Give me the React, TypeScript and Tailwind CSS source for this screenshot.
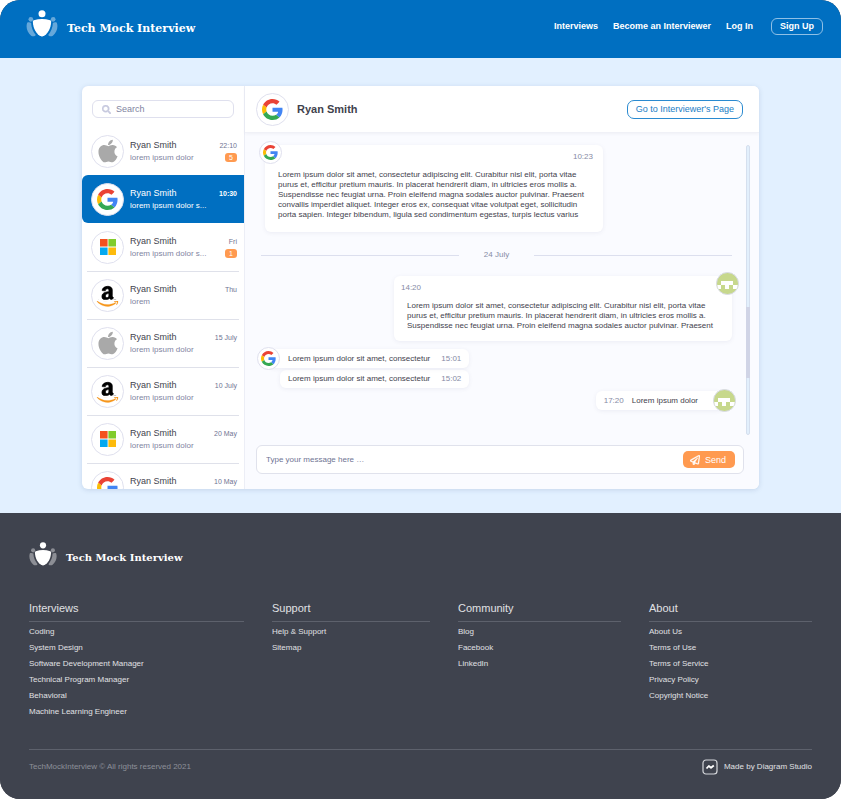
import React from "react";
import { FaAmazon, FaApple, FaRegPaperPlane, FaSearch } from "react-icons/fa";

type Brand = "apple" | "google" | "microsoft" | "amazon";

interface Conversation {
  brand: Brand;
  preview?: string;
  date: string;
  unread?: number;
  active?: boolean;
}

const conversations: Conversation[] = [
  { brand: "apple", preview: "lorem ipsum dolor", date: "22:10", unread: 5 },
  { brand: "google", preview: "lorem ipsum dolor s...", date: "10:30", active: true },
  { brand: "microsoft", preview: "lorem ipsum dolor s...", date: "Fri", unread: 1 },
  { brand: "amazon", preview: "lorem", date: "Thu" },
  { brand: "apple", preview: "lorem ipsum dolor", date: "15 July" },
  { brand: "amazon", preview: "lorem ipsum dolor", date: "10 July" },
  { brand: "microsoft", preview: "lorem ipsum dolor", date: "20 May" },
  { brand: "google", date: "10 May" },
];

const footerColumns = [
  {
    title: "Interviews",
    links: [
      "Coding",
      "System Design",
      "Software Development Manager",
      "Technical Program Manager",
      "Behavioral",
      "Machine Learning Engineer",
    ],
  },
  { title: "Support", links: ["Help & Support", "Sitemap"] },
  { title: "Community", links: ["Blog", "Facebook", "LinkedIn"] },
  {
    title: "About",
    links: ["About Us", "Terms of Use", "Terms of Service", "Privacy Policy", "Copyright Notice"],
  },
];

function LogoMark({ className }: { className: string }) {
  return (
    <svg viewBox="77 31 95 81" className={className} fill="#fff" aria-hidden="true">
      <g opacity="0.4">
        <circle cx="91" cy="59" r="7" />
        <circle cx="158" cy="59" r="7" />
        <path d="M80 69C84 67 89 68 92 70C92 83 98 97 106 106C103 111 96 111 92 108C81 99 75 83 80 69Z" />
        <path d="M169 69C165 67 160 68 157 70C157 83 151 97 143 106C146 111 153 111 157 108C168 99 174 83 169 69Z" />
      </g>
      <circle cx="124.5" cy="42" r="10.5" />
      <path d="M97 66Q97 63 100 62Q124.5 54 149 62Q152 63 152 66C151 87 142 103 127 110Q124.5 111 122 110C107 103 98 87 97 66Z" />
    </svg>
  );
}

function GoogleLogo({ className }: { className: string }) {
  return (
    <svg viewBox="0 0 48 48" className={className} aria-hidden="true">
      <path fill="#EA4335" d="M24 9.5c3.54 0 6.71 1.22 9.21 3.6l6.85-6.85C35.9 2.38 30.47 0 24 0 14.62 0 6.51 5.38 2.56 13.22l7.98 6.19C12.43 13.72 17.74 9.5 24 9.5z" />
      <path fill="#4285F4" d="M46.98 24.55c0-1.57-.15-3.09-.38-4.55H24v9.02h12.94c-.58 2.96-2.26 5.48-4.78 7.18l7.73 6c4.51-4.18 7.09-10.36 7.09-17.65z" />
      <path fill="#FBBC05" d="M10.53 28.59c-.48-1.45-.76-2.99-.76-4.59s.27-3.14.76-4.59l-7.98-6.19C.92 16.46 0 20.12 0 24c0 3.88.92 7.54 2.56 10.78l7.97-6.19z" />
      <path fill="#34A853" d="M24 48c6.48 0 11.93-2.13 15.89-5.81l-7.73-6c-2.15 1.45-4.92 2.3-8.16 2.3-6.26 0-11.57-4.22-13.47-9.91l-7.98 6.19C6.51 42.62 14.62 48 24 48z" />
    </svg>
  );
}

function BrandLogo({ brand }: { brand: Brand }) {
  switch (brand) {
    case "apple":
      return <FaApple className="size-[26px] text-[#a9a9a9]" aria-hidden="true" />;
    case "google":
      return <GoogleLogo className="size-[21px]" />;
    case "microsoft":
      return (
        <svg viewBox="0 0 16 16" className="size-4" aria-hidden="true">
          <path fill="#f4511e" d="M0 0h7.6v7.6H0z" />
          <path fill="#81cc2b" d="M8.4 0H16v7.6H8.4z" />
          <path fill="#03a9f0" d="M0 8.4h7.6V16H0z" />
          <path fill="#fdbb0c" d="M8.4 8.4H16V16H8.4z" />
        </svg>
      );
    case "amazon":
      return (
        <span className="grid place-items-center" aria-hidden="true">
          <FaAmazon className="col-start-1 row-start-1 size-[21px] stroke-black stroke-[16] text-black [clip-path:inset(0_0_27%_0)]" />
          <FaAmazon className="col-start-1 row-start-1 size-[25px] stroke-[#f7981d] stroke-[4] text-[#f7981d] [clip-path:inset(74%_0_0_0)]" />
        </span>
      );
  }
}

function BrandAvatar({ brand }: { brand: Brand }) {
  return (
    <span className="flex size-[33px] shrink-0 items-center justify-center rounded-full border border-[#dfe0ee] bg-white">
      <BrandLogo brand={brand} />
    </span>
  );
}

function SmallGoogleAvatar({ className }: { className: string }) {
  return (
    <span className={`absolute flex size-[23px] items-center justify-center rounded-full border border-[#dfe0ee] bg-white ${className}`}>
      <GoogleLogo className="size-[15px]" />
    </span>
  );
}

function UserAvatar({ className }: { className: string }) {
  return (
    <span className={`absolute size-[23px] overflow-hidden rounded-full border border-[#d9dbe8] bg-[#c7d88c] ${className}`}>
      <svg viewBox="0 0 21 21" className="size-full" shapeRendering="crispEdges" aria-hidden="true">
        <path fill="#fff" d="M4 8h12v4H4zM0 12h4v4H0zM8 12h4v4H8zM16 12h5v4h-5z" />
      </svg>
    </span>
  );
}

function ConversationRow({ item }: { item: Conversation }) {
  const active = item.active;
  return (
    <li>
      <button
        type="button"
        className={`flex h-12 w-full items-center pr-[7px] pl-[9px] text-left ${active ? "rounded-l-[6px] bg-[#006fc1]" : ""}`}
      >
        <BrandAvatar brand={item.brand} />
        <span className="ml-[6px] flex h-[25px] min-w-0 flex-1 flex-col gap-px">
          <span className={`text-[9px] leading-3 ${active ? "text-white" : "text-[#3f424d]"}`}>Ryan Smith</span>
          {item.preview && (
            <span className={`text-[8px] leading-3 whitespace-nowrap ${active ? "text-white" : "text-[#7f849f]"}`}>{item.preview}</span>
          )}
        </span>
        <span className="flex h-6 shrink-0 flex-col items-end">
          <span className={`text-[7px] leading-[14px] ${active ? "font-bold text-white" : "text-[#6f7493]"}`}>{item.date}</span>
          {item.unread && (
            <span className="flex h-[9px] w-3 items-center justify-center rounded-[3px] bg-[#ff9a50] text-[7px] leading-[9px] text-white">
              {item.unread}
            </span>
          )}
        </span>
      </button>
    </li>
  );
}

const bubble = "bg-white shadow-[0_1px_4px_rgba(63,66,110,0.08)]";
const messageText = "text-[8px] leading-[10px] text-[#3f424d]";
const timeText = "text-[8px] leading-[10px] text-[#868ba5]";

function ChatPanel() {
  return (
    <section className="flex min-w-0 flex-1 flex-col bg-[#fafbff]">
      <header className="flex h-[47px] shrink-0 items-center border-b border-[#f0f1f7] bg-white pr-4 pl-[11px] shadow-[0_1px_3px_rgba(63,66,110,0.06)]">
        <BrandAvatar brand="google" />
        <h1 className="ml-2 flex-1 text-[11px] leading-4 font-bold text-[#3f424d]">Ryan Smith</h1>
        <button
          type="button"
          className="h-[19px] rounded-[7px] border border-[#2a8ad0] bg-white px-2 text-[9px] leading-4 text-[#1a7dc5]"
        >
          Go to Interviewer's Page
        </button>
      </header>

      <div className="flex min-h-0 flex-1 pt-3 pr-[9px] pl-4">
        <div className="flex min-w-0 flex-1 flex-col pr-[14px]">
          <article className={`relative ml-1 w-[338px] rounded-[6px] px-[13px] pt-[7px] pb-3 ${bubble}`}>
            <SmallGoogleAvatar className="-top-1 -left-[6px]" />
            <time className={`-mr-[3px] block text-right ${timeText}`}>10:23</time>
            <p className={`mt-2 pr-1 ${messageText}`}>
              Lorem ipsum dolor sit amet, consectetur adipiscing elit. Curabitur nisl elit, porta vitae purus et,
              efficitur pretium mauris. In placerat hendrerit diam, in ultricies eros mollis a. Suspendisse nec
              feugiat urna. Proin eleifend magna sodales auctor pulvinar. Praesent convallis imperdiet aliquet.
              Integer eros ex, consequat vitae volutpat eget, sollicitudin porta sapien. Integer bibendum, ligula sed
              condimentum egestas, turpis lectus varius
            </p>
          </article>

          <div className="mt-[18px] flex items-center gap-[25px]">
            <span className="h-px flex-1 bg-[#dcdfee]" />
            <span className={timeText}>24 July</span>
            <span className="h-px flex-1 bg-[#dcdfee]" />
          </div>

          <article className={`relative mt-4 w-[338px] self-end rounded-[6px] px-[13px] pt-[7px] pb-[10px] ${bubble}`}>
            <UserAvatar className="-top-1 -right-[7px]" />
            <time className={`-ml-[6px] block ${timeText}`}>14:20</time>
            <p className={`mt-2 pr-1 ${messageText}`}>
              Lorem ipsum dolor sit amet, consectetur adipiscing elit. Curabitur nisl elit, porta vitae purus et,
              efficitur pretium mauris. In placerat hendrerit diam, in ultricies eros mollis a. Suspendisse nec
              feugiat urna. Proin eleifend magna sodales auctor pulvinar. Praesent
            </p>
          </article>

          <article className={`relative mt-2 ml-2 flex h-[19px] items-center gap-[11px] self-start rounded-[6px] pr-2 pl-[19px] ${bubble}`}>
            <SmallGoogleAvatar className="-top-[2px] -left-3" />
            <p className={messageText}>Lorem ipsum dolor sit amet, consectetur</p>
            <time className={timeText}>15:01</time>
          </article>
          <article className={`mt-[2px] ml-[19px] flex h-[18px] items-center gap-[11px] self-start rounded-[6px] px-2 ${bubble}`}>
            <p className={messageText}>Lorem ipsum dolor sit amet, consectetur</p>
            <time className={timeText}>15:02</time>
          </article>

          <article className={`relative mt-[3px] mr-2 flex h-[19px] items-center gap-2 self-end rounded-[6px] pr-[26px] pl-2 ${bubble}`}>
            <time className={timeText}>17:20</time>
            <p className={messageText}>Lorem ipsum dolor</p>
            <UserAvatar className="-top-[2px] -right-3" />
          </article>
        </div>

        <div className="flex h-[290px] w-1 shrink-0 flex-col rounded-full border border-[#d5dfee] bg-[#e2effc] pt-[161px]">
          <span className="-mx-px h-[71px] shrink-0 bg-[#d0d4e6]" />
        </div>
      </div>

      <form
        className="mr-[15px] mb-[15px] ml-[11px] flex h-[29px] shrink-0 items-center rounded-[6px] border border-[#e0e2ec] bg-white pr-2 pl-[9px]"
        onSubmit={(event) => event.preventDefault()}
      >
        <input
          type="text"
          aria-label="Message"
          placeholder="Type your message here …"
          className="min-w-0 flex-1 bg-transparent text-[8px] leading-3 text-[#3f424d] outline-none placeholder:text-[#6f7493]"
        />
        <button
          type="submit"
          className="flex h-[17px] items-center gap-[5px] rounded-[5px] bg-[#ff9a50] pr-[9px] pl-[7px] text-[9px] leading-3 text-white"
        >
          <FaRegPaperPlane className="size-[10px] stroke-white stroke-[16]" aria-hidden="true" />
          Send
        </button>
      </form>
    </section>
  );
}

export default function App() {
  return (
    <div className="min-h-screen bg-white pr-px font-['Liberation_Sans',Arial,sans-serif]">
      <div className="overflow-hidden rounded-[20px] bg-[#3f434e]">
        <header className="flex h-[58px] items-start justify-between bg-[#006fc1] pr-[18px] pl-[26px] text-white">
          <a href="#" className="mt-[10px] flex items-center gap-[9px]">
            <LogoMark className="h-[27px] w-8" />
            <span className="mt-[10px] font-['DejaVu_Serif',serif] text-[11px] leading-4 font-bold">Tech Mock Interview</span>
          </a>
          <nav className="mt-[18px] flex items-center text-[9px] leading-[17px] font-bold">
            <a href="#">Interviews</a>
            <a href="#" className="ml-[15px]">Become an Interviewer</a>
            <a href="#" className="ml-[15px]">Log In</a>
            <a href="#" className="ml-[18px] rounded-[6px] border border-[#8fc0e6] px-2 leading-[15px]">Sign Up</a>
          </nav>
        </header>

        <main className="bg-[#e2f0ff] px-[82px] pt-7 pb-6">
          <div className="flex h-[403px] overflow-hidden rounded-[6px] bg-white shadow-[0_1px_5px_rgba(60,90,140,0.18)]">
            <aside className="flex w-[163px] shrink-0 flex-col border-r border-[#eceef6]">
              <label className="mx-[10px] mt-[14px] flex h-[18px] shrink-0 items-center gap-[5px] rounded-[6px] border border-[#dfe0ee] pl-[9px]">
                <FaSearch className="size-[9px] shrink-0 stroke-[#c9cbe0] stroke-[24] text-[#c9cbe0]" aria-hidden="true" />
                <input
                  type="search"
                  aria-label="Search"
                  placeholder="Search"
                  className="min-w-0 flex-1 bg-transparent text-[9px] leading-3 outline-none placeholder:text-[#7f849f]"
                />
              </label>
              <ul className="mt-[9px] min-h-0 flex-1 overflow-hidden">
                {conversations.map((item, index) => (
                  <React.Fragment key={index}>
                    {index > 2 && <li aria-hidden="true" className="mr-[5px] -mb-px ml-[5px] h-px bg-[#dfe1ea]" />}
                    <ConversationRow item={item} />
                  </React.Fragment>
                ))}
              </ul>
            </aside>
            <ChatPanel />
          </div>
        </main>

        <footer className="bg-[#3f434e] px-[29px] pt-[29px] pb-6 text-[#e0e1e4]">
          <a href="#" className="flex items-center gap-[9px] text-white">
            <LogoMark className="h-6 w-7" />
            <span className="mt-2 font-['DejaVu_Serif',serif] text-[10px] leading-4 font-bold">Tech Mock Interview</span>
          </a>
          <div className="mt-[34px] grid grid-cols-[215fr_158fr_163fr_163fr] gap-7">
            {footerColumns.map((column) => (
              <section key={column.title}>
                <h2 className="border-b border-[#5d616c] pb-[5px] text-[11px] leading-4">{column.title}</h2>
                <ul className="mt-[2px]">
                  {column.links.map((link) => (
                    <li key={link} className="text-[8px] leading-4">
                      <a href="#" className="block">{link}</a>
                    </li>
                  ))}
                </ul>
              </section>
            ))}
          </div>
          <div className="mt-[29px] flex items-center justify-between border-t border-[#5d616c] pt-[9px] text-[8px] leading-4">
            <p className="text-[#8d9099]">TechMockInterview © All rights reserved 2021</p>
            <a href="#" className="flex items-center gap-[6px]">
              <svg viewBox="0 0 16 16" className="size-4" fill="none" aria-hidden="true">
                <rect x="1" y="1" width="14" height="14" rx="3" stroke="#d5d7db" strokeWidth="1.2" />
                <path d="M4.5 9.5L6.8 7L9 8.8L11.8 6.5" stroke="#fff" strokeWidth="1.8" strokeLinejoin="round" />
              </svg>
              Made by Diagram Studio
            </a>
          </div>
        </footer>
      </div>
    </div>
  );
}
